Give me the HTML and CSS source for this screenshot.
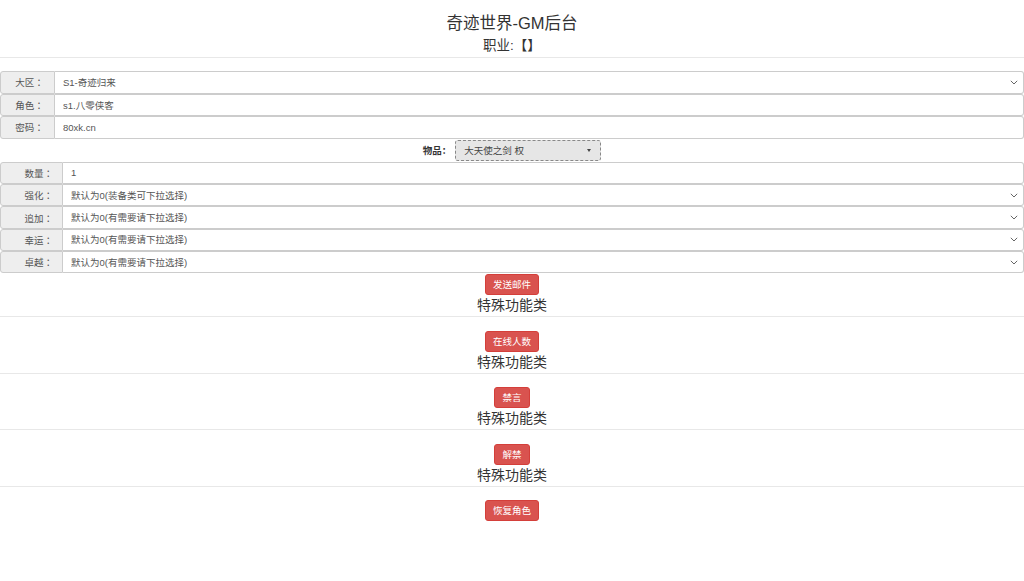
FILE: index.html
```html
<!DOCTYPE html>
<html lang="zh-CN">
<head>
<meta charset="utf-8">
<title>奇迹世界-GM后台</title>
<link rel="stylesheet" href="styles.css">
</head>
<body>
<header class="header">
  <h1 class="title">奇迹世界-GM后台</h1>
  <h2 class="subtitle">职业:【】</h2>
</header>

<div class="group group-top">
  <div class="row">
    <span class="addon">大区<span class="colon">：</span></span>
    <select class="control"><option>S1-奇迹归来</option></select>
  </div>
  <div class="row">
    <span class="addon">角色<span class="colon">：</span></span>
    <input class="control" type="text" value="s1.八零侠客">
  </div>
  <div class="row">
    <span class="addon">密码<span class="colon">：</span></span>
    <input class="control" type="text" value="80xk.cn">
  </div>
</div>

<div class="item-row">
  <span class="item-label">物品<span class="colon">：</span></span>
  <div class="item-select"><span>大天使之剑 权</span><i class="caret"></i></div>
</div>

<div class="group group-bottom">
  <div class="row">
    <span class="addon">数量<span class="colon">：</span></span>
    <input class="control" type="text" value="1">
  </div>
  <div class="row">
    <span class="addon">强化<span class="colon">：</span></span>
    <select class="control"><option>默认为0(装备类可下拉选择)</option></select>
  </div>
  <div class="row">
    <span class="addon">追加<span class="colon">：</span></span>
    <select class="control"><option>默认为0(有需要请下拉选择)</option></select>
  </div>
  <div class="row">
    <span class="addon">幸运<span class="colon">：</span></span>
    <select class="control"><option>默认为0(有需要请下拉选择)</option></select>
  </div>
  <div class="row">
    <span class="addon">卓越<span class="colon">：</span></span>
    <select class="control"><option>默认为0(有需要请下拉选择)</option></select>
  </div>
</div>

<section class="section">
  <button class="btn">发送邮件</button>
  <div class="section-title">特殊功能类</div>
  <hr class="rule">
</section>
<section class="section">
  <button class="btn">在线人数</button>
  <div class="section-title">特殊功能类</div>
  <hr class="rule">
</section>
<section class="section">
  <button class="btn">禁言</button>
  <div class="section-title">特殊功能类</div>
  <hr class="rule">
</section>
<section class="section">
  <button class="btn">解禁</button>
  <div class="section-title">特殊功能类</div>
  <hr class="rule">
</section>
<section class="section">
  <button class="btn">恢复角色</button>
</section>
</body>
</html>
```

FILE: styles.css
```css
html, body {
  margin: 0;
  padding: 0;
  background: #fff;
}
body {
  font-family: "Liberation Sans", "Noto Sans CJK SC", sans-serif;
  color: #333;
  font-size: 9.5px;
}
.colon {
  font-family: "Noto Sans CJK JP", "Noto Sans CJK SC", sans-serif;
}
.header {
  padding-top: 12px;
  border-bottom: 1px solid #e8e8e8;
  text-align: center;
}
.title {
  margin: 0;
  font-size: 16.5px;
  font-weight: normal;
  line-height: 22px;
}
.subtitle {
  margin: 0;
  font-size: 13.5px;
  font-weight: normal;
  line-height: 23px;
}
.group-top {
  margin-top: 13px;
}
.row {
  display: flex;
  height: 22.6px;
  box-sizing: border-box;
}
.group-bottom .row {
  height: 22.3px;
}
.addon {
  flex: none;
  width: 55px;
  box-sizing: border-box;
  display: flex;
  align-items: center;
  justify-content: center;
  padding-left: 4px;
  background: #eee;
  border: 1px solid #ccc;
  border-radius: 3px 0 0 3px;
  color: #555;
  font-size: 9.5px;
}
.group-bottom .addon {
  width: 63px;
  justify-content: flex-end;
  padding-left: 0;
  padding-right: 9px;
}
.control {
  flex: 1;
  min-width: 0;
  height: 100%;
  box-sizing: border-box;
  margin: 0;
  border: 1px solid #ccc;
  border-left: 0;
  border-radius: 0 3px 3px 0;
  background-color: #fff;
  color: #555;
  font-family: "Liberation Sans", "Noto Sans CJK SC", sans-serif;
  font-size: 9.5px;
  padding: 0 0 0 8px;
  outline: none;
}
select.control {
  -webkit-appearance: none;
  appearance: none;
  padding-left: 8px;
  background-image: url("data:image/svg+xml;utf8,<svg xmlns='http://www.w3.org/2000/svg' width='8' height='5' viewBox='0 0 8 5'><path d='M0.8 0.8 L4 4 L7.2 0.8' fill='none' stroke='%23666' stroke-width='1'/></svg>");
  background-repeat: no-repeat;
  background-position: right 5px center;
  background-size: 8px 5px;
}
.item-row {
  height: 23px;
  display: flex;
  align-items: center;
  justify-content: center;
  gap: 4px;
}
.item-label {
  font-weight: bold;
  font-size: 9.5px;
  color: #333;
}
.item-select {
  width: 146px;
  height: 21px;
  box-sizing: border-box;
  border: 1px dashed #888;
  border-radius: 3px;
  background: #e6e6e6;
  display: flex;
  align-items: center;
  justify-content: space-between;
  padding: 0 9px 0 8px;
  color: #444;
  font-size: 9.5px;
}
.caret {
  width: 0;
  height: 0;
  border-left: 2.5px solid transparent;
  border-right: 2.5px solid transparent;
  border-top: 3px solid #444;
}
.section {
  display: flex;
  flex-direction: column;
  align-items: center;
}
.group-bottom + .section {
  margin-top: 1px;
}
.btn {
  height: 21px;
  box-sizing: border-box;
  padding: 0 7px;
  border: 1px solid #d43f3a;
  border-radius: 3px;
  background: #d9534f;
  color: #fff;
  font-family: "Liberation Sans", "Noto Sans CJK SC", sans-serif;
  font-size: 9.5px;
  line-height: 19px;
  cursor: pointer;
}
.section-title {
  font-size: 14px;
  line-height: 20px;
  color: #333;
}
.rule {
  align-self: stretch;
  margin: 1px 0 13.5px;
  border: 0;
  border-top: 1px solid #e8e8e8;
  height: 0;
}
```
